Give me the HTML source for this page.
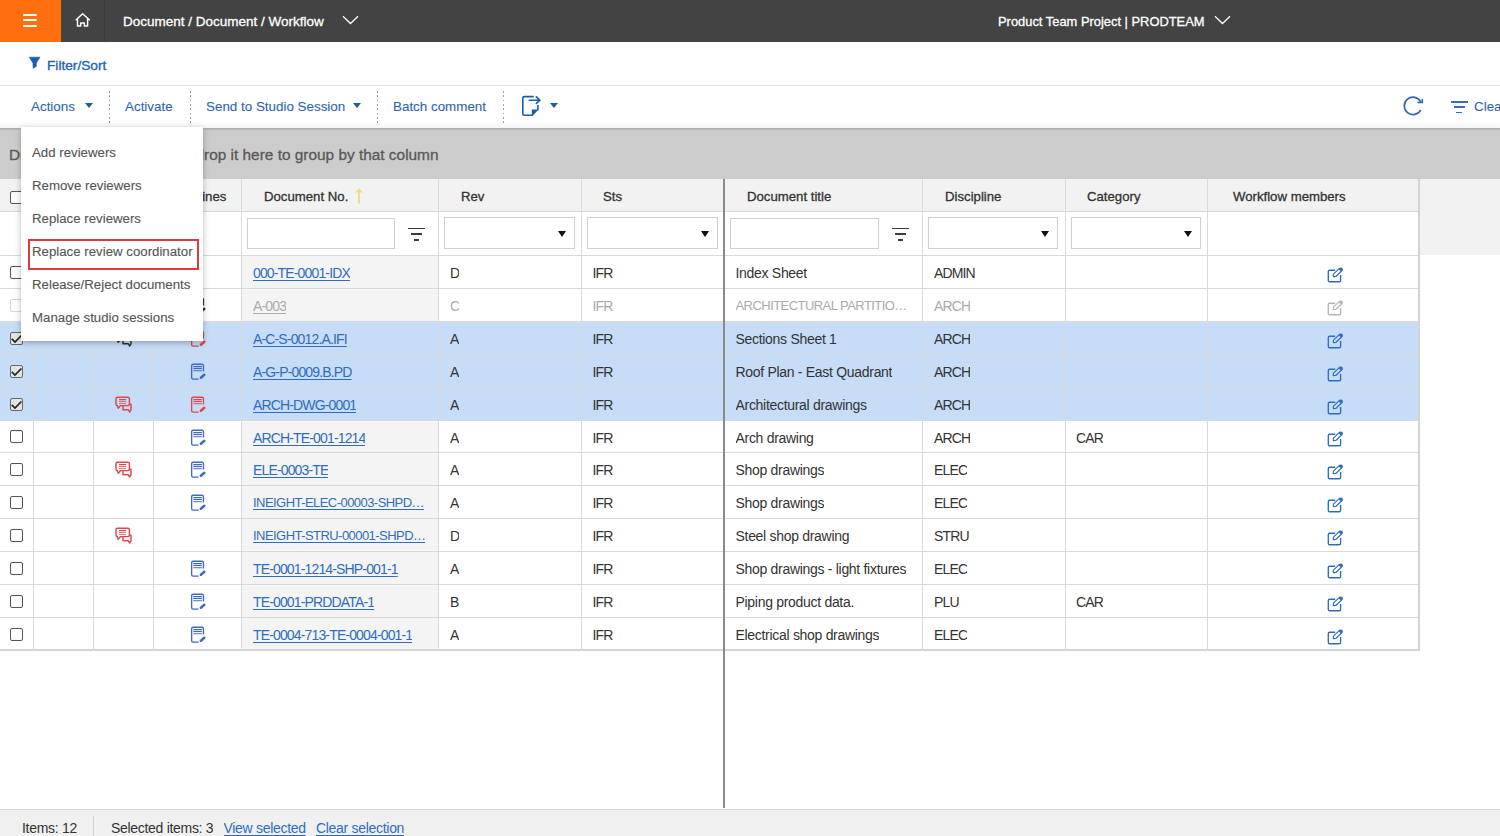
<!DOCTYPE html><html><head><meta charset="utf-8"><style>
*{box-sizing:border-box;margin:0;padding:0}
html,body{width:1500px;height:836px;overflow:hidden;background:#fff;font-family:"Liberation Sans",sans-serif}
body{position:relative}
.a{position:absolute}
.wt{color:#fff;font-size:13.5px;-webkit-text-stroke:0.3px #fff;white-space:nowrap;line-height:16px}
.tbt{font-size:13.4px;-webkit-text-stroke:0.1px #2e66b5;white-space:nowrap;color:#2e66b5;line-height:16px}
.dsep{position:absolute;top:91.3px;height:33px;width:1.3px;background:repeating-linear-gradient(to bottom,#a0a0a0 0,#a0a0a0 1.8px,transparent 1.8px,transparent 4.3px)}
.caret{position:absolute;width:0;height:0;border-left:4.5px solid transparent;border-right:4.5px solid transparent;border-top:5px solid #1a5cb5}
.hd{position:absolute;top:181px;height:31px;font-size:13.2px;-webkit-text-stroke:0.3px #333;color:#333;line-height:31px;white-space:nowrap}
.vl{position:absolute;width:1px;background:#dadada}
.hl{position:absolute;height:1px;background:#d9d9d9}
.tx{position:absolute;font-size:14px;letter-spacing:-0.3px;color:#333;white-space:nowrap;line-height:16px;overflow:hidden;text-overflow:ellipsis}
.up{letter-spacing:-0.85px}
.lk{letter-spacing:-0.85px;color:#2f6cc0;text-decoration:underline;text-decoration-thickness:1px;text-underline-offset:2px}
.dd{position:absolute;top:217px;height:32px;border:1px solid #d0d0d0;background:#fff}
.dd:after{content:"";position:absolute;right:8px;top:13px;border-left:4px solid transparent;border-right:4px solid transparent;border-top:6px solid #111}
.ti{position:absolute;top:218px;height:31px;border:1px solid #d0d0d0;background:#fff}
.fl{position:absolute;height:1.7px;background:#3c3c3c}
.cb{position:absolute;width:13px;height:13px;border:1.6px solid #555;border-radius:2px;background:#fff}
.mi{position:absolute;left:32px;font-size:13.25px;color:#555;-webkit-text-stroke:0.12px #555;white-space:nowrap;line-height:16px}
</style></head><body>
<div class="a" style="left:0;top:0;width:1500px;height:42px;background:#434343"></div>
<div class="a" style="left:0;top:0;width:61px;height:42px;background:#ff6f0f"></div>
<div class="a" style="left:23px;top:13.6px;width:14px;height:2px;background:#fff;border-radius:1px"></div>
<div class="a" style="left:23px;top:19.1px;width:14px;height:2px;background:#fff;border-radius:1px"></div>
<div class="a" style="left:23px;top:24.9px;width:14px;height:2px;background:#fff;border-radius:1px"></div>
<div class="a" style="left:104px;top:0;width:1px;height:42px;background:#3a3a3a"></div>
<svg class="a" style="left:74px;top:12px" width="18" height="16" viewBox="0 0 18 16"><path d="M1.7 8.3L8.6 1.7L15.8 8.3M3.5 6.8V13.95H6.7V11H10.3V13.95H13.6V6.8" fill="none" stroke="#fff" stroke-width="1.45" stroke-linejoin="round"/></svg>
<div class="a wt" style="left:123px;top:14px">Document / Document / Workflow</div>
<svg class="a" style="left:342px;top:15px" width="17" height="10" viewBox="0 0 17 10"><path d="M1 1.2l7.5 7.3L16 1.2" fill="none" stroke="#fff" stroke-width="1.3"/></svg>
<div class="a wt" style="left:998px;top:14px;font-size:12.9px">Product Team Project | PRODTEAM</div>
<svg class="a" style="left:1214px;top:15px" width="17" height="10" viewBox="0 0 17 10"><path d="M1 1.2l7.5 7.3L16 1.2" fill="none" stroke="#fff" stroke-width="1.3"/></svg>
<svg class="a" style="left:28px;top:56px" width="14" height="14" viewBox="0 0 14 14"><path d="M1.2 1.2H12L8.3 7V10.4L5 12.3V7Z" fill="#1a5cb5" stroke="#1a5cb5" stroke-width="0.6" stroke-linejoin="round"/></svg>
<div class="a" style="left:47px;top:58px;font-size:13.7px;-webkit-text-stroke:0.35px #2461b8;color:#2461b8;line-height:16px">Filter/Sort</div>
<div class="hl" style="left:0;top:85px;width:1500px;background:#e4e4e4"></div>
<div class="a tbt" style="left:31px;top:99px">Actions</div>
<div class="caret" style="left:85px;top:103px"></div>
<div class="dsep" style="left:109px"></div>
<div class="a tbt" style="left:125px;top:99px">Activate</div>
<div class="dsep" style="left:190px"></div>
<div class="a tbt" style="left:206px;top:99px">Send to Studio Session</div>
<div class="caret" style="left:352.5px;top:103px"></div>
<div class="dsep" style="left:377px"></div>
<div class="a tbt" style="left:393px;top:99px">Batch comment</div>
<div class="dsep" style="left:503px"></div>
<svg class="a" style="left:520px;top:94px" width="24" height="24" viewBox="0 0 24 24"><path d="M13.75 2.65H4.3Q2.8 2.65 2.8 4.15V19.8Q2.8 21.3 4.3 21.3H12.4M17.9 11V16.3" fill="none" stroke="#1a5cb5" stroke-width="1.6"/><path d="M11.8 15.6H18.6L12.4 22.1H11.8Z" fill="#1a5cb5"/><path d="M8.7 6.2H19.6M15.8 2.4L19.8 6.2L15.8 9.8" fill="none" stroke="#1a5cb5" stroke-width="1.6"/></svg>
<div class="caret" style="left:550px;top:103px"></div>
<svg class="a" style="left:1400px;top:93px" width="26" height="26" viewBox="0 0 26 26"><path d="M20.78 16.79A8.7 8.7 0 1 1 20.75 8.95" fill="none" stroke="#2e66b5" stroke-width="1.6"/><path d="M17.4 9.5H22.3V5.9" fill="none" stroke="#2e66b5" stroke-width="1.6"/></svg>
<div class="fl" style="left:1451px;top:101px;width:16.5px;height:1.5px;background:#3b6bbd"></div>
<div class="fl" style="left:1453.6px;top:106.3px;width:11.2px;height:1.5px;background:#3b6bbd"></div>
<div class="fl" style="left:1456.4px;top:111.8px;width:5.6px;height:1.5px;background:#3b6bbd"></div>
<div class="a tbt" style="left:1474px;top:99px">Clear</div>
<div class="a" style="left:0;top:121px;width:1500px;height:7px;background:linear-gradient(rgba(0,0,0,0),rgba(0,0,0,0.035))"></div>
<div class="a" style="left:0;top:128px;width:1500px;height:51px;background:#cccccc"></div>
<div class="a" style="left:0;top:128px;width:1500px;height:3px;background:linear-gradient(#a9a9a9,#cccccc)"></div>
<div class="a" style="left:9px;top:146px;font-size:15.4px;-webkit-text-stroke:0.3px #595959;color:#595959;white-space:nowrap;line-height:18px">Drag a column header and drop it here to group by that column</div>
<div class="a" style="left:0;top:179px;width:1500px;height:32px;background:#f2f2f2"></div>
<div class="a" style="left:1419px;top:211px;width:81px;height:44px;background:#f2f2f2"></div>
<div class="a" style="left:0;top:211px;width:1419px;height:44px;background:#fff"></div>
<div class="cb" style="left:9.5px;top:191px;background:#fff"></div>
<div class="hd" style="left:178px">Outlines</div>
<div class="hd" style="left:264px">Document No.</div>
<div class="hd" style="left:461px">Rev</div>
<div class="hd" style="left:603px">Sts</div>
<div class="hd" style="left:747px">Document title</div>
<div class="hd" style="left:945px">Discipline</div>
<div class="hd" style="left:1087px">Category</div>
<div class="hd" style="left:1233px">Workflow members</div>
<svg class="a" style="left:355px;top:187px" width="8" height="17" viewBox="0 0 8 17"><path d="M4 16.5V2" stroke="#f3dc80" stroke-width="2"/><path d="M0.5 5.5L4 1l3.5 4.5" fill="#f3dc80"/></svg>
<div class="ti" style="left:247px;width:148px"></div>
<div class="ti" style="left:730px;width:149px"></div>
<div class="fl" style="left:408.3px;top:227.6px;width:16.4px"></div>
<div class="fl" style="left:411.0px;top:233.3px;width:11px"></div>
<div class="fl" style="left:413.8px;top:239px;width:5.4px"></div>
<div class="fl" style="left:892.2px;top:227.6px;width:16.4px"></div>
<div class="fl" style="left:894.9000000000001px;top:233.3px;width:11px"></div>
<div class="fl" style="left:897.7px;top:239px;width:5.4px"></div>
<div class="dd" style="left:444px;width:131px"></div>
<div class="dd" style="left:587px;width:131px"></div>
<div class="dd" style="left:928px;width:130px"></div>
<div class="dd" style="left:1071px;width:130px"></div>
<div class="a" style="left:0;top:255px;width:1419px;height:33px;background:#fff"></div>
<div class="a" style="left:241px;top:255px;width:197px;height:33px;background:#f4f4f4"></div>
<div class="cb" style="left:9.5px;top:265.5px"></div>
<div class="tx lk" style="left:253px;top:265.0px;color:#2f6cc0">000-TE-0001-IDX</div>
<div class="tx up" style="left:450px;top:265.0px;color:#333">D</div>
<div class="tx up" style="left:592.5px;top:265.0px;color:#333">IFR</div>
<div class="tx" style="left:735.5px;top:265.0px;color:#333">Index Sheet</div>
<div class="tx up" style="left:934px;top:265.0px;color:#333">ADMIN</div>
<div class="a" style="left:1326.5px;top:266.5px"><svg width="17" height="17" viewBox="0 0 17 17"><path d="M8.2 3.2H2.6Q1.3 3.2 1.3 4.5V13.4Q1.3 14.7 2.6 14.7H12.3Q13.6 14.7 13.6 13.4V8.1" fill="none" stroke="#2f6cc0" stroke-width="1.35"/><path d="M6.3 9.6L6.43 7.08L12.73 1.08L15.07 3.52L8.77 9.52Z" fill="none" stroke="#2f6cc0" stroke-width="1.15" stroke-linejoin="round"/><circle cx="14" cy="2.3" r="1.8" fill="#2f6cc0"/></svg></div>
<div class="a" style="left:0;top:288px;width:1419px;height:33px;background:#fff"></div>
<div class="a" style="left:241px;top:288px;width:197px;height:33px;background:#f4f4f4"></div>
<div class="cb" style="left:9.5px;top:298.5px;border-color:#d6d6d6"></div>
<div class="a" style="left:190px;top:296.0px"><svg width="17" height="19" viewBox="0 0 17 19"><path d="M13.45 9.6V3.65Q13.45 2.25 12.05 2.25H3.05Q1.65 2.25 1.65 3.65V15.75Q1.65 17.15 3.05 17.15H8.6" fill="none" stroke="#333" stroke-width="1.35"/><path d="M3.3 4.5h8.6M3.3 6.4h8.6" stroke="#333" stroke-width="1.15"/><path d="M3.3 8.6h8.6" stroke="#333" stroke-width="1.4" stroke-opacity="0.75"/><path d="M10.9 15.8L14.3 12.8" stroke="#333" stroke-width="2.5" stroke-linecap="round"/></svg></div>
<div class="tx lk" style="left:253px;top:298.0px;color:#aaa">A-003</div>
<div class="tx up" style="left:450px;top:298.0px;color:#aaa">C</div>
<div class="tx up" style="left:592.5px;top:298.0px;color:#aaa">IFR</div>
<div class="tx" style="left:735.5px;top:298.0px;color:#aaa;font-size:13px;letter-spacing:-0.55px">ARCHITECTURAL PARTITIO…</div>
<div class="tx up" style="left:934px;top:298.0px;color:#aaa">ARCH</div>
<div class="a" style="left:1326.5px;top:299.5px"><svg width="17" height="17" viewBox="0 0 17 17"><path d="M8.2 3.2H2.6Q1.3 3.2 1.3 4.5V13.4Q1.3 14.7 2.6 14.7H12.3Q13.6 14.7 13.6 13.4V8.1" fill="none" stroke="#b5b5b5" stroke-width="1.35"/><path d="M6.3 9.6L6.43 7.08L12.73 1.08L15.07 3.52L8.77 9.52Z" fill="none" stroke="#b5b5b5" stroke-width="1.15" stroke-linejoin="round"/><circle cx="14" cy="2.3" r="1.8" fill="#b5b5b5"/></svg></div>
<div class="a" style="left:0;top:321px;width:1419px;height:33px;background:#c6dcf7"></div>
<div class="cb" style="left:9.5px;top:331.5px;background:#e4e4e4;border-color:#666"></div>
<svg class="a" style="left:10px;top:332.5px" width="13" height="12" viewBox="0 0 13 12"><path d="M1.8 5.8l3.2 3.2 6.4-6.5" fill="none" stroke="#222" stroke-width="1.7"/></svg>
<div class="a" style="left:114px;top:329.0px"><svg width="19" height="19" viewBox="0 0 19 19"><g fill="none" stroke="#333" stroke-width="1.45" stroke-linejoin="round"><path d="M3.1 10.6L4.2 13.3L6.6 10.6H13.9Q15.4 10.6 15.4 9.1V3.8Q15.4 2.3 13.9 2.3H3.5Q2 2.3 2 3.8V9.1Q2 10.6 3.5 10.6Z"/><path d="M15.4 9.2H17V14.7L15.7 17.1L14.2 14.7H9V10.6"/></g><g stroke="#333" stroke-width="1.1"><path d="M5 4.5h7.1M5 6.3h7.1"/><path d="M5 8.5h7.1" stroke-opacity="0.7"/></g></svg></div>
<div class="a" style="left:190px;top:329.0px"><svg width="17" height="19" viewBox="0 0 17 19"><path d="M13.45 9.6V3.65Q13.45 2.25 12.05 2.25H3.05Q1.65 2.25 1.65 3.65V15.75Q1.65 17.15 3.05 17.15H8.6" fill="none" stroke="#e0474c" stroke-width="1.35"/><path d="M3.3 4.5h8.6M3.3 6.4h8.6" stroke="#e0474c" stroke-width="1.15"/><path d="M3.3 8.6h8.6" stroke="#e0474c" stroke-width="1.4" stroke-opacity="0.75"/><path d="M10.9 15.8L14.3 12.8" stroke="#e0474c" stroke-width="2.5" stroke-linecap="round"/></svg></div>
<div class="tx lk" style="left:253px;top:331.0px;color:#2f6cc0">A-C-S-0012.A.IFI</div>
<div class="tx up" style="left:450px;top:331.0px;color:#333">A</div>
<div class="tx up" style="left:592.5px;top:331.0px;color:#333">IFR</div>
<div class="tx" style="left:735.5px;top:331.0px;color:#333">Sections Sheet 1</div>
<div class="tx up" style="left:934px;top:331.0px;color:#333">ARCH</div>
<div class="a" style="left:1326.5px;top:332.5px"><svg width="17" height="17" viewBox="0 0 17 17"><path d="M8.2 3.2H2.6Q1.3 3.2 1.3 4.5V13.4Q1.3 14.7 2.6 14.7H12.3Q13.6 14.7 13.6 13.4V8.1" fill="none" stroke="#2f6cc0" stroke-width="1.35"/><path d="M6.3 9.6L6.43 7.08L12.73 1.08L15.07 3.52L8.77 9.52Z" fill="none" stroke="#2f6cc0" stroke-width="1.15" stroke-linejoin="round"/><circle cx="14" cy="2.3" r="1.8" fill="#2f6cc0"/></svg></div>
<div class="a" style="left:0;top:354px;width:1419px;height:33px;background:#c6dcf7"></div>
<div class="cb" style="left:9.5px;top:364.5px;background:#e4e4e4;border-color:#666"></div>
<svg class="a" style="left:10px;top:365.5px" width="13" height="12" viewBox="0 0 13 12"><path d="M1.8 5.8l3.2 3.2 6.4-6.5" fill="none" stroke="#222" stroke-width="1.7"/></svg>
<div class="a" style="left:190px;top:362.0px"><svg width="17" height="19" viewBox="0 0 17 19"><path d="M13.45 9.6V3.65Q13.45 2.25 12.05 2.25H3.05Q1.65 2.25 1.65 3.65V15.75Q1.65 17.15 3.05 17.15H8.6" fill="none" stroke="#3d6bc2" stroke-width="1.35"/><path d="M3.3 4.5h8.6M3.3 6.4h8.6" stroke="#3d6bc2" stroke-width="1.15"/><path d="M3.3 8.6h8.6" stroke="#3d6bc2" stroke-width="1.4" stroke-opacity="0.75"/><path d="M10.9 15.8L14.3 12.8" stroke="#3d6bc2" stroke-width="2.5" stroke-linecap="round"/></svg></div>
<div class="tx lk" style="left:253px;top:364.0px;color:#2f6cc0">A-G-P-0009.B.PD</div>
<div class="tx up" style="left:450px;top:364.0px;color:#333">A</div>
<div class="tx up" style="left:592.5px;top:364.0px;color:#333">IFR</div>
<div class="tx" style="left:735.5px;top:364.0px;color:#333">Roof Plan - East Quadrant</div>
<div class="tx up" style="left:934px;top:364.0px;color:#333">ARCH</div>
<div class="a" style="left:1326.5px;top:365.5px"><svg width="17" height="17" viewBox="0 0 17 17"><path d="M8.2 3.2H2.6Q1.3 3.2 1.3 4.5V13.4Q1.3 14.7 2.6 14.7H12.3Q13.6 14.7 13.6 13.4V8.1" fill="none" stroke="#2f6cc0" stroke-width="1.35"/><path d="M6.3 9.6L6.43 7.08L12.73 1.08L15.07 3.52L8.77 9.52Z" fill="none" stroke="#2f6cc0" stroke-width="1.15" stroke-linejoin="round"/><circle cx="14" cy="2.3" r="1.8" fill="#2f6cc0"/></svg></div>
<div class="a" style="left:0;top:387px;width:1419px;height:33px;background:#c6dcf7"></div>
<div class="cb" style="left:9.5px;top:397.5px;background:#e4e4e4;border-color:#666"></div>
<svg class="a" style="left:10px;top:398.5px" width="13" height="12" viewBox="0 0 13 12"><path d="M1.8 5.8l3.2 3.2 6.4-6.5" fill="none" stroke="#222" stroke-width="1.7"/></svg>
<div class="a" style="left:114px;top:395.0px"><svg width="19" height="19" viewBox="0 0 19 19"><g fill="none" stroke="#e0474c" stroke-width="1.45" stroke-linejoin="round"><path d="M3.1 10.6L4.2 13.3L6.6 10.6H13.9Q15.4 10.6 15.4 9.1V3.8Q15.4 2.3 13.9 2.3H3.5Q2 2.3 2 3.8V9.1Q2 10.6 3.5 10.6Z"/><path d="M15.4 9.2H17V14.7L15.7 17.1L14.2 14.7H9V10.6"/></g><g stroke="#e0474c" stroke-width="1.1"><path d="M5 4.5h7.1M5 6.3h7.1"/><path d="M5 8.5h7.1" stroke-opacity="0.7"/></g></svg></div>
<div class="a" style="left:190px;top:395.0px"><svg width="17" height="19" viewBox="0 0 17 19"><path d="M13.45 9.6V3.65Q13.45 2.25 12.05 2.25H3.05Q1.65 2.25 1.65 3.65V15.75Q1.65 17.15 3.05 17.15H8.6" fill="none" stroke="#e0474c" stroke-width="1.35"/><path d="M3.3 4.5h8.6M3.3 6.4h8.6" stroke="#e0474c" stroke-width="1.15"/><path d="M3.3 8.6h8.6" stroke="#e0474c" stroke-width="1.4" stroke-opacity="0.75"/><path d="M10.9 15.8L14.3 12.8" stroke="#e0474c" stroke-width="2.5" stroke-linecap="round"/></svg></div>
<div class="tx lk" style="left:253px;top:397.0px;color:#2f6cc0">ARCH-DWG-0001</div>
<div class="tx up" style="left:450px;top:397.0px;color:#333">A</div>
<div class="tx up" style="left:592.5px;top:397.0px;color:#333">IFR</div>
<div class="tx" style="left:735.5px;top:397.0px;color:#333">Architectural drawings</div>
<div class="tx up" style="left:934px;top:397.0px;color:#333">ARCH</div>
<div class="a" style="left:1326.5px;top:398.5px"><svg width="17" height="17" viewBox="0 0 17 17"><path d="M8.2 3.2H2.6Q1.3 3.2 1.3 4.5V13.4Q1.3 14.7 2.6 14.7H12.3Q13.6 14.7 13.6 13.4V8.1" fill="none" stroke="#2f6cc0" stroke-width="1.35"/><path d="M6.3 9.6L6.43 7.08L12.73 1.08L15.07 3.52L8.77 9.52Z" fill="none" stroke="#2f6cc0" stroke-width="1.15" stroke-linejoin="round"/><circle cx="14" cy="2.3" r="1.8" fill="#2f6cc0"/></svg></div>
<div class="a" style="left:0;top:420px;width:1419px;height:32px;background:#fff"></div>
<div class="a" style="left:241px;top:420px;width:197px;height:32px;background:#f4f4f4"></div>
<div class="cb" style="left:9.5px;top:430.0px"></div>
<div class="a" style="left:190px;top:427.5px"><svg width="17" height="19" viewBox="0 0 17 19"><path d="M13.45 9.6V3.65Q13.45 2.25 12.05 2.25H3.05Q1.65 2.25 1.65 3.65V15.75Q1.65 17.15 3.05 17.15H8.6" fill="none" stroke="#3d6bc2" stroke-width="1.35"/><path d="M3.3 4.5h8.6M3.3 6.4h8.6" stroke="#3d6bc2" stroke-width="1.15"/><path d="M3.3 8.6h8.6" stroke="#3d6bc2" stroke-width="1.4" stroke-opacity="0.75"/><path d="M10.9 15.8L14.3 12.8" stroke="#3d6bc2" stroke-width="2.5" stroke-linecap="round"/></svg></div>
<div class="tx lk" style="left:253px;top:429.5px;color:#2f6cc0">ARCH-TE-001-1214</div>
<div class="tx up" style="left:450px;top:429.5px;color:#333">A</div>
<div class="tx up" style="left:592.5px;top:429.5px;color:#333">IFR</div>
<div class="tx" style="left:735.5px;top:429.5px;color:#333">Arch drawing</div>
<div class="tx up" style="left:934px;top:429.5px;color:#333">ARCH</div>
<div class="tx up" style="left:1076px;top:429.5px;color:#333">CAR</div>
<div class="a" style="left:1326.5px;top:431.0px"><svg width="17" height="17" viewBox="0 0 17 17"><path d="M8.2 3.2H2.6Q1.3 3.2 1.3 4.5V13.4Q1.3 14.7 2.6 14.7H12.3Q13.6 14.7 13.6 13.4V8.1" fill="none" stroke="#2f6cc0" stroke-width="1.35"/><path d="M6.3 9.6L6.43 7.08L12.73 1.08L15.07 3.52L8.77 9.52Z" fill="none" stroke="#2f6cc0" stroke-width="1.15" stroke-linejoin="round"/><circle cx="14" cy="2.3" r="1.8" fill="#2f6cc0"/></svg></div>
<div class="a" style="left:0;top:452px;width:1419px;height:33px;background:#fff"></div>
<div class="a" style="left:241px;top:452px;width:197px;height:33px;background:#f4f4f4"></div>
<div class="cb" style="left:9.5px;top:462.5px"></div>
<div class="a" style="left:114px;top:460.0px"><svg width="19" height="19" viewBox="0 0 19 19"><g fill="none" stroke="#e0474c" stroke-width="1.45" stroke-linejoin="round"><path d="M3.1 10.6L4.2 13.3L6.6 10.6H13.9Q15.4 10.6 15.4 9.1V3.8Q15.4 2.3 13.9 2.3H3.5Q2 2.3 2 3.8V9.1Q2 10.6 3.5 10.6Z"/><path d="M15.4 9.2H17V14.7L15.7 17.1L14.2 14.7H9V10.6"/></g><g stroke="#e0474c" stroke-width="1.1"><path d="M5 4.5h7.1M5 6.3h7.1"/><path d="M5 8.5h7.1" stroke-opacity="0.7"/></g></svg></div>
<div class="a" style="left:190px;top:460.0px"><svg width="17" height="19" viewBox="0 0 17 19"><path d="M13.45 9.6V3.65Q13.45 2.25 12.05 2.25H3.05Q1.65 2.25 1.65 3.65V15.75Q1.65 17.15 3.05 17.15H8.6" fill="none" stroke="#3d6bc2" stroke-width="1.35"/><path d="M3.3 4.5h8.6M3.3 6.4h8.6" stroke="#3d6bc2" stroke-width="1.15"/><path d="M3.3 8.6h8.6" stroke="#3d6bc2" stroke-width="1.4" stroke-opacity="0.75"/><path d="M10.9 15.8L14.3 12.8" stroke="#3d6bc2" stroke-width="2.5" stroke-linecap="round"/></svg></div>
<div class="tx lk" style="left:253px;top:462.0px;color:#2f6cc0">ELE-0003-TE</div>
<div class="tx up" style="left:450px;top:462.0px;color:#333">A</div>
<div class="tx up" style="left:592.5px;top:462.0px;color:#333">IFR</div>
<div class="tx" style="left:735.5px;top:462.0px;color:#333">Shop drawings</div>
<div class="tx up" style="left:934px;top:462.0px;color:#333">ELEC</div>
<div class="a" style="left:1326.5px;top:463.5px"><svg width="17" height="17" viewBox="0 0 17 17"><path d="M8.2 3.2H2.6Q1.3 3.2 1.3 4.5V13.4Q1.3 14.7 2.6 14.7H12.3Q13.6 14.7 13.6 13.4V8.1" fill="none" stroke="#2f6cc0" stroke-width="1.35"/><path d="M6.3 9.6L6.43 7.08L12.73 1.08L15.07 3.52L8.77 9.52Z" fill="none" stroke="#2f6cc0" stroke-width="1.15" stroke-linejoin="round"/><circle cx="14" cy="2.3" r="1.8" fill="#2f6cc0"/></svg></div>
<div class="a" style="left:0;top:485px;width:1419px;height:33px;background:#fff"></div>
<div class="a" style="left:241px;top:485px;width:197px;height:33px;background:#f4f4f4"></div>
<div class="cb" style="left:9.5px;top:495.5px"></div>
<div class="a" style="left:190px;top:493.0px"><svg width="17" height="19" viewBox="0 0 17 19"><path d="M13.45 9.6V3.65Q13.45 2.25 12.05 2.25H3.05Q1.65 2.25 1.65 3.65V15.75Q1.65 17.15 3.05 17.15H8.6" fill="none" stroke="#3d6bc2" stroke-width="1.35"/><path d="M3.3 4.5h8.6M3.3 6.4h8.6" stroke="#3d6bc2" stroke-width="1.15"/><path d="M3.3 8.6h8.6" stroke="#3d6bc2" stroke-width="1.4" stroke-opacity="0.75"/><path d="M10.9 15.8L14.3 12.8" stroke="#3d6bc2" stroke-width="2.5" stroke-linecap="round"/></svg></div>
<div class="tx lk" style="left:253px;top:495.0px;color:#2f6cc0;font-size:13px;letter-spacing:-0.55px">INEIGHT-ELEC-00003-SHPD…</div>
<div class="tx up" style="left:450px;top:495.0px;color:#333">A</div>
<div class="tx up" style="left:592.5px;top:495.0px;color:#333">IFR</div>
<div class="tx" style="left:735.5px;top:495.0px;color:#333">Shop drawings</div>
<div class="tx up" style="left:934px;top:495.0px;color:#333">ELEC</div>
<div class="a" style="left:1326.5px;top:496.5px"><svg width="17" height="17" viewBox="0 0 17 17"><path d="M8.2 3.2H2.6Q1.3 3.2 1.3 4.5V13.4Q1.3 14.7 2.6 14.7H12.3Q13.6 14.7 13.6 13.4V8.1" fill="none" stroke="#2f6cc0" stroke-width="1.35"/><path d="M6.3 9.6L6.43 7.08L12.73 1.08L15.07 3.52L8.77 9.52Z" fill="none" stroke="#2f6cc0" stroke-width="1.15" stroke-linejoin="round"/><circle cx="14" cy="2.3" r="1.8" fill="#2f6cc0"/></svg></div>
<div class="a" style="left:0;top:518px;width:1419px;height:33px;background:#fff"></div>
<div class="a" style="left:241px;top:518px;width:197px;height:33px;background:#f4f4f4"></div>
<div class="cb" style="left:9.5px;top:528.5px"></div>
<div class="a" style="left:114px;top:526.0px"><svg width="19" height="19" viewBox="0 0 19 19"><g fill="none" stroke="#e0474c" stroke-width="1.45" stroke-linejoin="round"><path d="M3.1 10.6L4.2 13.3L6.6 10.6H13.9Q15.4 10.6 15.4 9.1V3.8Q15.4 2.3 13.9 2.3H3.5Q2 2.3 2 3.8V9.1Q2 10.6 3.5 10.6Z"/><path d="M15.4 9.2H17V14.7L15.7 17.1L14.2 14.7H9V10.6"/></g><g stroke="#e0474c" stroke-width="1.1"><path d="M5 4.5h7.1M5 6.3h7.1"/><path d="M5 8.5h7.1" stroke-opacity="0.7"/></g></svg></div>
<div class="tx lk" style="left:253px;top:528.0px;color:#2f6cc0;font-size:13px;letter-spacing:-0.55px">INEIGHT-STRU-00001-SHPD…</div>
<div class="tx up" style="left:450px;top:528.0px;color:#333">D</div>
<div class="tx up" style="left:592.5px;top:528.0px;color:#333">IFR</div>
<div class="tx" style="left:735.5px;top:528.0px;color:#333">Steel shop drawing</div>
<div class="tx up" style="left:934px;top:528.0px;color:#333">STRU</div>
<div class="a" style="left:1326.5px;top:529.5px"><svg width="17" height="17" viewBox="0 0 17 17"><path d="M8.2 3.2H2.6Q1.3 3.2 1.3 4.5V13.4Q1.3 14.7 2.6 14.7H12.3Q13.6 14.7 13.6 13.4V8.1" fill="none" stroke="#2f6cc0" stroke-width="1.35"/><path d="M6.3 9.6L6.43 7.08L12.73 1.08L15.07 3.52L8.77 9.52Z" fill="none" stroke="#2f6cc0" stroke-width="1.15" stroke-linejoin="round"/><circle cx="14" cy="2.3" r="1.8" fill="#2f6cc0"/></svg></div>
<div class="a" style="left:0;top:551px;width:1419px;height:33px;background:#fff"></div>
<div class="a" style="left:241px;top:551px;width:197px;height:33px;background:#f4f4f4"></div>
<div class="cb" style="left:9.5px;top:561.5px"></div>
<div class="a" style="left:190px;top:559.0px"><svg width="17" height="19" viewBox="0 0 17 19"><path d="M13.45 9.6V3.65Q13.45 2.25 12.05 2.25H3.05Q1.65 2.25 1.65 3.65V15.75Q1.65 17.15 3.05 17.15H8.6" fill="none" stroke="#3d6bc2" stroke-width="1.35"/><path d="M3.3 4.5h8.6M3.3 6.4h8.6" stroke="#3d6bc2" stroke-width="1.15"/><path d="M3.3 8.6h8.6" stroke="#3d6bc2" stroke-width="1.4" stroke-opacity="0.75"/><path d="M10.9 15.8L14.3 12.8" stroke="#3d6bc2" stroke-width="2.5" stroke-linecap="round"/></svg></div>
<div class="tx lk" style="left:253px;top:561.0px;color:#2f6cc0">TE-0001-1214-SHP-001-1</div>
<div class="tx up" style="left:450px;top:561.0px;color:#333">A</div>
<div class="tx up" style="left:592.5px;top:561.0px;color:#333">IFR</div>
<div class="tx" style="left:735.5px;top:561.0px;color:#333">Shop drawings - light fixtures</div>
<div class="tx up" style="left:934px;top:561.0px;color:#333">ELEC</div>
<div class="a" style="left:1326.5px;top:562.5px"><svg width="17" height="17" viewBox="0 0 17 17"><path d="M8.2 3.2H2.6Q1.3 3.2 1.3 4.5V13.4Q1.3 14.7 2.6 14.7H12.3Q13.6 14.7 13.6 13.4V8.1" fill="none" stroke="#2f6cc0" stroke-width="1.35"/><path d="M6.3 9.6L6.43 7.08L12.73 1.08L15.07 3.52L8.77 9.52Z" fill="none" stroke="#2f6cc0" stroke-width="1.15" stroke-linejoin="round"/><circle cx="14" cy="2.3" r="1.8" fill="#2f6cc0"/></svg></div>
<div class="a" style="left:0;top:584px;width:1419px;height:33px;background:#fff"></div>
<div class="a" style="left:241px;top:584px;width:197px;height:33px;background:#f4f4f4"></div>
<div class="cb" style="left:9.5px;top:594.5px"></div>
<div class="a" style="left:190px;top:592.0px"><svg width="17" height="19" viewBox="0 0 17 19"><path d="M13.45 9.6V3.65Q13.45 2.25 12.05 2.25H3.05Q1.65 2.25 1.65 3.65V15.75Q1.65 17.15 3.05 17.15H8.6" fill="none" stroke="#3d6bc2" stroke-width="1.35"/><path d="M3.3 4.5h8.6M3.3 6.4h8.6" stroke="#3d6bc2" stroke-width="1.15"/><path d="M3.3 8.6h8.6" stroke="#3d6bc2" stroke-width="1.4" stroke-opacity="0.75"/><path d="M10.9 15.8L14.3 12.8" stroke="#3d6bc2" stroke-width="2.5" stroke-linecap="round"/></svg></div>
<div class="tx lk" style="left:253px;top:594.0px;color:#2f6cc0">TE-0001-PRDDATA-1</div>
<div class="tx up" style="left:450px;top:594.0px;color:#333">B</div>
<div class="tx up" style="left:592.5px;top:594.0px;color:#333">IFR</div>
<div class="tx" style="left:735.5px;top:594.0px;color:#333">Piping product data.</div>
<div class="tx up" style="left:934px;top:594.0px;color:#333">PLU</div>
<div class="tx up" style="left:1076px;top:594.0px;color:#333">CAR</div>
<div class="a" style="left:1326.5px;top:595.5px"><svg width="17" height="17" viewBox="0 0 17 17"><path d="M8.2 3.2H2.6Q1.3 3.2 1.3 4.5V13.4Q1.3 14.7 2.6 14.7H12.3Q13.6 14.7 13.6 13.4V8.1" fill="none" stroke="#2f6cc0" stroke-width="1.35"/><path d="M6.3 9.6L6.43 7.08L12.73 1.08L15.07 3.52L8.77 9.52Z" fill="none" stroke="#2f6cc0" stroke-width="1.15" stroke-linejoin="round"/><circle cx="14" cy="2.3" r="1.8" fill="#2f6cc0"/></svg></div>
<div class="a" style="left:0;top:617px;width:1419px;height:33px;background:#fff"></div>
<div class="a" style="left:241px;top:617px;width:197px;height:33px;background:#f4f4f4"></div>
<div class="cb" style="left:9.5px;top:627.5px"></div>
<div class="a" style="left:190px;top:625.0px"><svg width="17" height="19" viewBox="0 0 17 19"><path d="M13.45 9.6V3.65Q13.45 2.25 12.05 2.25H3.05Q1.65 2.25 1.65 3.65V15.75Q1.65 17.15 3.05 17.15H8.6" fill="none" stroke="#3d6bc2" stroke-width="1.35"/><path d="M3.3 4.5h8.6M3.3 6.4h8.6" stroke="#3d6bc2" stroke-width="1.15"/><path d="M3.3 8.6h8.6" stroke="#3d6bc2" stroke-width="1.4" stroke-opacity="0.75"/><path d="M10.9 15.8L14.3 12.8" stroke="#3d6bc2" stroke-width="2.5" stroke-linecap="round"/></svg></div>
<div class="tx lk" style="left:253px;top:627.0px;color:#2f6cc0">TE-0004-713-TE-0004-001-1</div>
<div class="tx up" style="left:450px;top:627.0px;color:#333">A</div>
<div class="tx up" style="left:592.5px;top:627.0px;color:#333">IFR</div>
<div class="tx" style="left:735.5px;top:627.0px;color:#333">Electrical shop drawings</div>
<div class="tx up" style="left:934px;top:627.0px;color:#333">ELEC</div>
<div class="a" style="left:1326.5px;top:628.5px"><svg width="17" height="17" viewBox="0 0 17 17"><path d="M8.2 3.2H2.6Q1.3 3.2 1.3 4.5V13.4Q1.3 14.7 2.6 14.7H12.3Q13.6 14.7 13.6 13.4V8.1" fill="none" stroke="#2f6cc0" stroke-width="1.35"/><path d="M6.3 9.6L6.43 7.08L12.73 1.08L15.07 3.52L8.77 9.52Z" fill="none" stroke="#2f6cc0" stroke-width="1.15" stroke-linejoin="round"/><circle cx="14" cy="2.3" r="1.8" fill="#2f6cc0"/></svg></div>
<div class="hl" style="left:0;top:211px;width:1419px"></div>
<div class="hl" style="left:0;top:255px;width:1419px"></div>
<div class="hl" style="left:0;top:288px;width:1419px"></div>
<div class="hl" style="left:0;top:321px;width:1419px"></div>
<div class="hl" style="left:0;top:354px;width:1419px"></div>
<div class="hl" style="left:0;top:387px;width:1419px"></div>
<div class="hl" style="left:0;top:420px;width:1419px"></div>
<div class="hl" style="left:0;top:452px;width:1419px"></div>
<div class="hl" style="left:0;top:485px;width:1419px"></div>
<div class="hl" style="left:0;top:518px;width:1419px"></div>
<div class="hl" style="left:0;top:551px;width:1419px"></div>
<div class="hl" style="left:0;top:584px;width:1419px"></div>
<div class="hl" style="left:0;top:617px;width:1419px"></div>
<div class="hl" style="left:0;top:649px;width:1420px;height:2px;background:#d4d4d4"></div>
<div class="vl" style="left:33px;top:179px;height:472px"></div>
<div class="vl" style="left:93px;top:179px;height:472px"></div>
<div class="vl" style="left:153px;top:179px;height:472px"></div>
<div class="vl" style="left:241px;top:179px;height:472px"></div>
<div class="vl" style="left:438px;top:179px;height:472px"></div>
<div class="vl" style="left:581px;top:179px;height:472px"></div>
<div class="vl" style="left:922px;top:179px;height:472px"></div>
<div class="vl" style="left:1065px;top:179px;height:472px"></div>
<div class="vl" style="left:1207px;top:179px;height:472px"></div>
<div class="vl" style="left:1418.4px;width:1.7px;background:#d4d4d4;top:179px;height:472px"></div>
<div class="a" style="left:722.5px;top:179px;width:2px;height:629px;background:#8a8a8a"></div>
<div class="a" style="left:0;top:809px;width:1500px;height:27px;background:#f0f0f0;border-top:1px solid #d6d6d6"></div>
<div class="a" style="left:93px;top:816px;width:1px;height:20px;background:#d0d0d0"></div>
<div class="tx" style="left:22px;top:820px">Items: 12</div>
<div class="tx" style="left:111px;top:820px">Selected items: 3</div>
<div class="tx lk" style="left:223.5px;top:820px;letter-spacing:-0.3px">View selected</div>
<div class="tx lk" style="left:316px;top:820px;letter-spacing:-0.3px">Clear selection</div>
<div class="a" style="left:21px;top:127px;width:182px;height:214px;background:#fff;box-shadow:0 2px 6px rgba(0,0,0,0.28)"></div>
<div class="mi" style="top:144.8px">Add reviewers</div>
<div class="mi" style="top:177.8px">Remove reviewers</div>
<div class="mi" style="top:210.8px">Replace reviewers</div>
<div class="mi" style="top:243.8px">Replace review coordinator</div>
<div class="mi" style="top:276.8px">Release/Reject documents</div>
<div class="mi" style="top:309.8px">Manage studio sessions</div>
<div class="a" style="left:28px;top:239px;width:171px;height:31px;border:2px solid #e0393e"></div>
</body></html>
